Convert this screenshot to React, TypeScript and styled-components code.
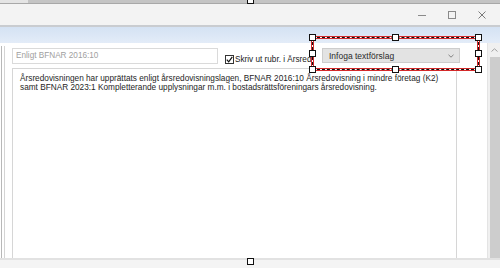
import React from "react";
import styled, { createGlobalStyle } from "styled-components";

const GlobalStyle = createGlobalStyle`
  html, body { margin: 0; padding: 0; background: #ffffff; }
  body { font-family: "Liberation Sans", Arial, sans-serif; }
  * { box-sizing: border-box; }
`;

const Root = styled.div`
  position: relative;
  width: 500px;
  height: 268px;
  overflow: hidden;
  display: flex;
  flex-direction: column;
  background: #ffffff;
`;

const TopEdge = styled.div`
  height: 4px;
  background: linear-gradient(to right, #e4e4e4 0 28px, #c4c4c4 28px);
  border-bottom: 1px solid #a8a8a8;
`;

const TitleBar = styled.div`
  height: 21px;
  background: #f3f3f3;
  display: flex;
  justify-content: flex-end;
  align-items: center;
  padding-right: 3px;
`;

const WinButton = styled.div`
  width: 30px;
  height: 21px;
  display: flex;
  align-items: center;
  justify-content: center;
`;

const Divider = styled.div`
  height: 2px;
  background: #c9ccd0;
`;

const BlueBand = styled.div`
  height: 16px;
  background: linear-gradient(to bottom, #d4e2f3, #e3ecf8);
`;

const Body = styled.div`
  flex: 1;
  display: flex;
  min-height: 0;
`;

const LeftEdge = styled.div`
  width: 12px;
  display: flex;
  padding-top: 3px;
`;

const EdgeLine = styled.div<{ $color: string; $ml: number }>`
  width: 1px;
  margin-left: ${(p) => p.$ml}px;
  background: ${(p) => p.$color};
`;

const Main = styled.div`
  flex: 1;
  display: flex;
  flex-direction: column;
  padding-top: 5px;
  gap: 4px;
`;

const ControlRow = styled.div`
  display: flex;
  align-items: flex-end;
  height: 16px;
`;

const TextInput = styled.div`
  width: 206px;
  height: 16px;
  border: 1px solid #dadada;
  background: #ffffff;
  color: #a0a0a0;
  font-size: 8.2px;
  line-height: 14px;
  padding-left: 3px;
  white-space: nowrap;
`;

const CheckGroup = styled.div`
  display: flex;
  align-items: flex-end;
  margin-left: 7px;
`;

const CheckBox = styled.div`
  width: 9px;
  height: 9px;
  border: 1px solid #333333;
  background: #ffffff;
  display: flex;
  align-items: center;
  justify-content: center;
`;

const CheckLabel = styled.div`
  width: 79px;
  overflow: hidden;
  white-space: nowrap;
  font-size: 8.2px;
  line-height: 9px;
  color: #222222;
  margin-left: 1px;
`;

const Select = styled.div`
  margin-left: 8px;
  margin-bottom: 1px;
  width: 138px;
  height: 15px;
  background: #e3e3e3;
  border: 1px solid #cdcdcd;
  display: flex;
  align-items: center;
  justify-content: space-between;
  padding: 0 5px 0 6px;
  font-size: 8.5px;
  color: #2a2a2a;
`;

const TextArea = styled.div`
  width: 445px;
  flex: 1;
  border: 1px solid #d6d6d6;
  border-bottom: none;
  padding: 5px 0 0 7px;
  font-size: 8.25px;
  line-height: 9px;
  color: #1e1e1e;
`;

const ScrollBar = styled.div`
  width: 13px;
  display: flex;
  flex-direction: column;
  align-items: flex-end;
  background: #f0f0f0;
  border-left: 1px solid #e4e4e4;
`;

const ScrollArrow = styled.div`
  width: 12px;
  height: 14px;
  display: flex;
  align-items: center;
  justify-content: center;
`;

const ScrollThumb = styled.div`
  width: 10px;
  flex: 1;
  background: #cdcdcd;
`;

const BottomBar = styled.div`
  height: 10px;
  background: #f4f4f4;
  border-top: 2px solid #e2e2e2;
`;

const Selection = styled.div`
  position: absolute;
  left: 311px;
  top: 36px;
  width: 169px;
  height: 35px;
  border: 3px solid #d42a2a;
  pointer-events: none;
  &::before {
    content: "";
    position: absolute;
    inset: -2px;
    border: 1px solid #ffffff;
  }
  &::after {
    content: "";
    position: absolute;
    inset: -2px;
    border: 1px dashed #111111;
  }
`;

const Handle = styled.div<{ $x: number; $y: number }>`
  position: absolute;
  left: ${(p) => p.$x - 3}px;
  top: ${(p) => p.$y - 3}px;
  width: 7px;
  height: 7px;
  background: #ffffff;
  border: 1px solid #111111;
  z-index: 2;
`;

const handles: Array<[number, number]> = [
  [312, 37], [395, 37], [478, 37],
  [312, 53], [478, 53],
  [312, 69], [395, 69], [478, 69],
  [250, 0], [250, 261],
];

export default function App() {
  return (
    <>
      <GlobalStyle />
      <Root>
        <TopEdge />
        <TitleBar>
          <WinButton>
            <svg width="8" height="8" viewBox="0 0 8 8">
              <line x1="0" y1="4.5" x2="8" y2="4.5" stroke="#8a8a8a" strokeWidth="1" />
            </svg>
          </WinButton>
          <WinButton>
            <svg width="8" height="8" viewBox="0 0 8 8">
              <rect x="0.5" y="0.5" width="7" height="7" fill="none" stroke="#8a8a8a" strokeWidth="1" />
            </svg>
          </WinButton>
          <WinButton>
            <svg width="8" height="8" viewBox="0 0 8 8">
              <path d="M0.5 0.5 L7.5 7.5 M7.5 0.5 L0.5 7.5" stroke="#7a7a7a" strokeWidth="1" />
            </svg>
          </WinButton>
        </TitleBar>
        <Divider />
        <BlueBand />
        <Body>
          <LeftEdge>
            <EdgeLine $color="#b8b8b8" $ml={1} />
            <EdgeLine $color="#d4d4d4" $ml={2} />
          </LeftEdge>
          <Main>
            <ControlRow>
              <TextInput>Enligt BFNAR 2016:10</TextInput>
              <CheckGroup>
                <CheckBox>
                  <svg width="7" height="7" viewBox="0 0 7 7">
                    <path d="M0.8 3.6 L2.7 5.8 L6.3 0.8" fill="none" stroke="#111" strokeWidth="1.2" />
                  </svg>
                </CheckBox>
                <CheckLabel>Skriv ut rubr. i Årsredovisningen</CheckLabel>
              </CheckGroup>
              <Select>
                <span>Infoga textförslag</span>
                <svg width="6" height="4" viewBox="0 0 6 4">
                  <path d="M0.5 0.8 L3 3.2 L5.5 0.8" fill="none" stroke="#777" strokeWidth="0.9" />
                </svg>
              </Select>
            </ControlRow>
            <TextArea>
              Årsredovisningen har upprättats enligt årsredovisningslagen, BFNAR 2016:10 Årsredovisning i mindre företag (K2)
              <br />
              samt BFNAR 2023:1 Kompletterande upplysningar m.m. i bostadsrättsföreningars årsredovisning.
            </TextArea>
          </Main>
          <ScrollBar>
            <ScrollArrow>
              <svg width="7" height="4" viewBox="0 0 7 4">
                <path d="M0.5 3.5 L3.5 0.8 L6.5 3.5" fill="none" stroke="#a0a0a0" strokeWidth="1" />
              </svg>
            </ScrollArrow>
            <ScrollThumb />
          </ScrollBar>
        </Body>
        <BottomBar />
        <Selection />
        {handles.map(([x, y], i) => (
          <Handle key={i} $x={x} $y={y} />
        ))}
      </Root>
    </>
  );
}
